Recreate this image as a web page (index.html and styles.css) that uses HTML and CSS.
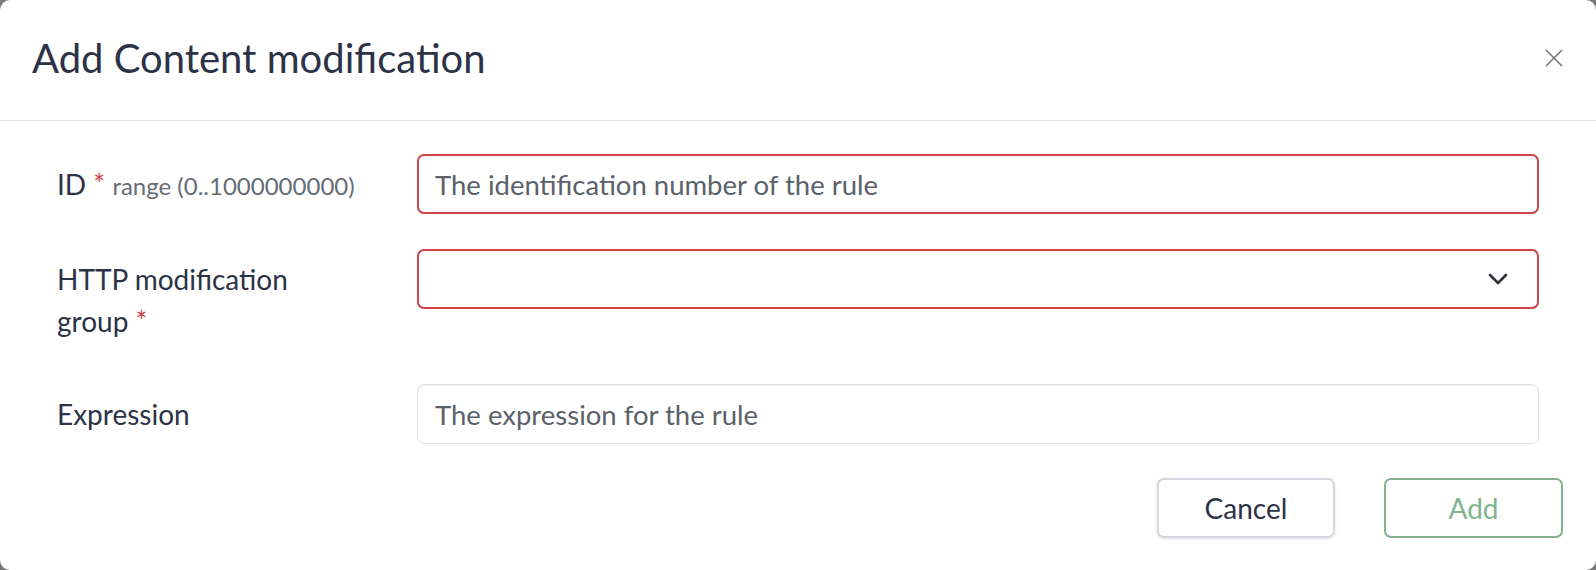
FILE: index.html
```html
<!DOCTYPE html>
<html lang="en">
<head>
<meta charset="utf-8">
<title>Add Content modification</title>
<link rel="stylesheet" href="styles.css">
</head>
<body>
<div class="modal">
  <div class="modal-header">
    <h1 class="modal-title">Add Content modification</h1>
    <button class="close" type="button" aria-label="Close">
      <svg width="18" height="18" viewBox="0 0 18 18"><path d="M1 1 L17 17 M17 1 L1 17" stroke="#777" stroke-width="1.6" fill="none"/></svg>
    </button>
  </div>
  <div class="modal-body">
    <div class="row">
      <label class="col-label">ID <span class="req">*</span> <span class="hint">range (0..1000000000)</span></label>
      <input class="control invalid" type="text" placeholder="The identification number of the rule">
    </div>
    <div class="row row-tall">
      <label class="col-label">HTTP modification<br>group <span class="req">*</span></label>
      <div class="control invalid select">
        <span class="select-value"></span>
        <svg class="chevron" width="20" height="12" viewBox="0 0 20 12"><path d="M2 2 L10 10 L18 2" stroke="#2f343a" stroke-width="2.6" fill="none" stroke-linecap="round" stroke-linejoin="round"/></svg>
      </div>
    </div>
    <div class="row">
      <label class="col-label">Expression</label>
      <input class="control" type="text" placeholder="The expression for the rule">
    </div>
  </div>
  <div class="modal-footer">
    <button class="btn btn-cancel" type="button">Cancel</button>
    <button class="btn btn-add" type="button">Add</button>
  </div>
</div>
</body>
</html>
```

FILE: styles.css
```css
* { box-sizing: border-box; }

html, body {
  margin: 0;
  padding: 0;
  width: 1596px;
  height: 570px;
  overflow: hidden;
  background: #7a7a7a;
  font-family: Lato, "Open Sans", sans-serif;
}

.modal {
  width: 1596px;
  height: 570px;
  background: #ffffff;
  border-radius: 10px;
  display: flex;
  flex-direction: column;
}

.modal-header {
  height: 121px;
  border-bottom: 1px solid #dee2e6;
  display: flex;
  align-items: center;
  justify-content: space-between;
  padding: 0 33px 5px 32px;
}

.modal-title {
  margin: 0;
  font-size: 40px;
  font-weight: 400;
  color: #2c3347;
  line-height: 48px;
}

.close {
  border: 0;
  background: transparent;
  padding: 0;
  width: 18px;
  height: 18px;
  display: flex;
  cursor: pointer;
}

.modal-body {
  padding: 33px 57px 0 57px;
}

.row {
  display: grid;
  grid-template-columns: 360px 1fr;
  align-items: start;
  margin-bottom: 33px;
}

.row-tall {
  margin-bottom: 33px;
}

.row:last-child {
  margin-bottom: 34px;
}

.col-label {
  font-size: 28px;
  line-height: 42px;
  padding: 9px 0 9px;
  color: #2c3347;
}

.req {
  color: #d0424a;
}

.hint {
  font-size: 24px;
  color: #656c74;
}

.control {
  display: block;
  width: 100%;
  height: 60px;
  border: 1px solid #dee2e6;
  border-radius: 7px;
  padding: 0 17px;
  font-family: Lato, "Open Sans", sans-serif;
  font-size: 27.5px;
  color: #2c3347;
  background: #ffffff;
  box-shadow: inset 0 1px 2px rgba(0, 0, 0, 0.06);
  outline: none;
}

.control::placeholder {
  color: #5b6168;
  opacity: 1;
}

.invalid {
  border: 2px solid #d0434b;
  padding: 0 16px;
}

.select {
  display: flex;
  align-items: center;
  justify-content: space-between;
  padding-right: 29px;
}

.chevron {
  display: block;
}

.modal-footer {
  display: flex;
  justify-content: flex-end;
  gap: 49px;
  padding: 0 33px 0 0;
}

.btn {
  height: 60px;
  border-radius: 7px;
  background: #ffffff;
  font-family: Lato, "Open Sans", sans-serif;
  font-size: 28px;
  cursor: pointer;
}

.btn-cancel {
  width: 178px;
  border: 2px solid #d3d8de;
  color: #2c3347;
  box-shadow: 0 1px 3px rgba(0, 0, 0, 0.12);
}

.btn-add {
  width: 179px;
  border: 2px solid #7fb38e;
  color: #7fb38e;
}
```
